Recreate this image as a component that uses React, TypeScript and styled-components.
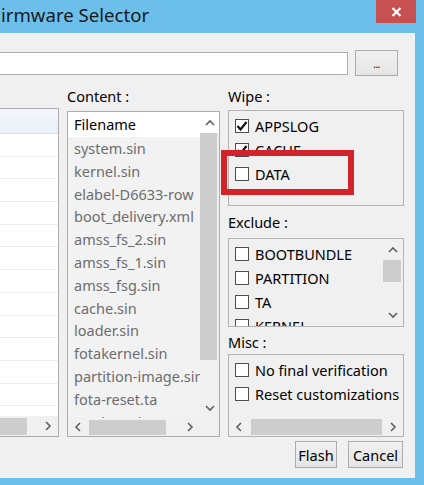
import React from 'react'
import styled, { createGlobalStyle } from 'styled-components'

const Global = createGlobalStyle`
  html, body {
    margin: 0;
    padding: 0;
    overflow: hidden;
    background: #6cbfeb;
  }
  body {
    font-family: "Noto Sans", "Open Sans", "DejaVu Sans", sans-serif;
    color: #000;
  }
  * { box-sizing: border-box; }
`

const Window = styled.div`
  width: 424px;
  height: 485px;
  background: #6cbfeb;
  display: flex;
  flex-direction: column;
`

const TitleBar = styled.div`
  height: 33px;
  flex: none;
  display: flex;
  justify-content: space-between;
  align-items: flex-start;
  padding-right: 8px;
`

const Title = styled.div`
  font-size: 18.6px;
  line-height: 30px;
  color: #1a1a1a;
  padding-left: 1px;
`

const CloseButton = styled.div`
  width: 40px;
  height: 23px;
  background: #c75050;
  display: flex;
  align-items: center;
  justify-content: center;
`

const Body = styled.div`
  width: 415px;
  height: 445px;
  flex: none;
  background: #f0f0f0;
  border-top: 1px solid #f8f8f8;
  padding: 16px 11px 0 0;
  display: flex;
  flex-direction: column;
  overflow: hidden;
`

const PathRow = styled.div`
  height: 26px;
  flex: none;
  display: flex;
  align-items: center;
  gap: 7px;
  margin-right: 6px;
`

const PathInput = styled.div`
  flex: 1;
  height: 23px;
  background: #fff;
  border: 1px solid #abadb3;
  border-left: none;
`

const Button = styled.div<{ $w: number; $h: number }>`
  width: ${p => p.$w}px;
  height: ${p => p.$h}px;
  border: 1px solid #acacac;
  background: linear-gradient(#f0f0f0, #e5e5e5);
  display: flex;
  align-items: center;
  justify-content: center;
  font-size: 14.5px;
  color: #000;
`

const Dots = styled.span`
  font-size: 10px;
  letter-spacing: -0.5px;
  padding-top: 2px;
`

const Main = styled.div`
  height: 361px;
  flex: none;
  display: grid;
  grid-template-columns: 59px 153px 1fr;
  grid-template-rows: minmax(0, 1fr);
  column-gap: 8px;
`

const Column = styled.div`
  position: relative;
  display: flex;
  flex-direction: column;
  min-width: 0;
  min-height: 0;
`

const LeftList = styled.div`
  margin-top: 32px;
  flex: 1;
  min-height: 0;
  display: flex;
  flex-direction: column;
  background: #fff;
  border: 1px solid #acacac;
  border-left: none;
  overflow: hidden;
`

const LeftHeader = styled.div`
  height: 25px;
  flex: none;
  background: linear-gradient(#f4f7fc, #e9f0f9);
  border-bottom: 1px solid #dfe3e8;
`

const LeftRows = styled.div`
  flex: 1;
  min-height: 0;
  overflow: hidden;
`

const LeftRow = styled.div`
  height: 22.7px;
  border-bottom: 1px solid #eeeeee;
`

const Label = styled.div<{ $top: number; $bottom: number }>`
  font-size: 14.5px;
  line-height: 20px;
  height: 20px;
  flex: none;
  margin: ${p => p.$top}px 0 ${p => p.$bottom}px;
  white-space: nowrap;
`

const ContentList = styled.div`
  flex: 1;
  min-height: 0;
  display: grid;
  grid-template-columns: minmax(0, 1fr) 19px;
  grid-template-rows: minmax(0, 1fr) 18px;
  border: 1px solid #acacac;
  background: #f0f0f0;
  overflow: hidden;
`

const Items = styled.div`
  background: #f2f2f2;
  overflow: hidden;
  min-width: 0;
  min-height: 0;
`

const HeaderCell = styled.div`
  height: 25px;
  background: #fff;
  padding-left: 6px;
  font-size: 14.5px;
  line-height: 25px;
  white-space: nowrap;
`

const Item = styled.div`
  height: 22.8px;
  padding-left: 6px;
  font-size: 14.5px;
  line-height: 22.8px;
  color: #6d6d6d;
  white-space: nowrap;
`

const VScroll = styled.div`
  display: flex;
  flex-direction: column;
  background: #f0f0f0;
  min-height: 0;
`

const VArrow = styled.div<{ $h: number; $white?: boolean }>`
  height: ${p => p.$h}px;
  flex: none;
  display: flex;
  align-items: center;
  justify-content: center;
  background: ${p => (p.$white ? '#fff' : 'transparent')};
`

const VThumb = styled.div<{ $h: number }>`
  height: ${p => p.$h}px;
  flex: none;
  margin: 0 2px 0 0;
  background: #cdcdcd;
`

const Spacer = styled.div`
  flex: 1;
`

const HScroll = styled.div<{ $h?: number }>`
  ${p => (p.$h ? `height: ${p.$h}px;` : '')}
  flex: none;
  display: flex;
  align-items: stretch;
  background: #f0f0f0;
  min-width: 0;
`

const HArrow = styled.div`
  width: 20px;
  flex: none;
  display: flex;
  align-items: center;
  justify-content: center;
`

const HThumb = styled.div<{ $left: number; $w: number }>`
  width: ${p => p.$w}px;
  margin: 2px 0 1px ${p => p.$left}px;
  flex: none;
  background: #cdcdcd;
`

const Group = styled.div<{ $h?: number }>`
  ${p => (p.$h ? `height: ${p.$h}px; flex: none;` : 'flex: 1; min-height: 0;')}
  border: 1px solid #b4b4b4;
  display: flex;
  flex-direction: column;
  overflow: hidden;
`

const GroupScroller = styled.div`
  flex: 1;
  display: grid;
  grid-template-columns: minmax(0, 1fr) 20px;
  grid-template-rows: minmax(0, 1fr);
  min-height: 0;
`

const Checks = styled.div<{ $top: number }>`
  padding: ${p => p.$top}px 0 0 6px;
  overflow: hidden;
  flex: 1;
  min-height: 0;
`

const CheckRow = styled.div`
  height: 24px;
  display: flex;
  align-items: center;
  gap: 6px;
  font-size: 14.5px;
  white-space: nowrap;
`

const Box = styled.div`
  width: 14px;
  height: 14px;
  flex: none;
  background: #fff;
  border: 1px solid #4d4d4d;
  display: flex;
  align-items: center;
  justify-content: center;
`

const Highlight = styled.div`
  position: absolute;
  left: -7px;
  top: 74px;
  width: 133px;
  height: 45px;
  border: 6px solid #d2232a;
`

const Footer = styled.div`
  margin-top: 4px;
  flex: none;
  display: flex;
  justify-content: flex-end;
  gap: 11px;
  padding-right: 1px;
`

const Chevron: React.FC<{ dir: 'up' | 'down' | 'left' | 'right' }> = ({ dir }) => {
  const d = {
    up: 'M1 6 L5 2 L9 6',
    down: 'M1 2 L5 6 L9 2',
    left: 'M6 1 L2 5 L6 9',
    right: 'M2 1 L6 5 L2 9',
  }[dir]
  const vert = dir === 'up' || dir === 'down'
  return (
    <svg width={vert ? 10 : 8} height={vert ? 8 : 10} viewBox={vert ? '0 0 10 8' : '0 0 8 10'}>
      <path d={d} fill="none" stroke="#606060" strokeWidth="1.6" />
    </svg>
  )
}

const Check: React.FC<{ checked?: boolean; label: string }> = ({ checked, label }) => (
  <CheckRow>
    <Box>
      {checked && (
        <svg width="12" height="12" viewBox="0 0 12 12">
          <path d="M1.5 6 L4.5 9.5 L10.5 2" fill="none" stroke="#111" strokeWidth="2.2" />
        </svg>
      )}
    </Box>
    {label}
  </CheckRow>
)

const files = [
  'system.sin',
  'kernel.sin',
  'elabel-D6633-row',
  'boot_delivery.xml',
  'amss_fs_2.sin',
  'amss_fs_1.sin',
  'amss_fsg.sin',
  'cache.sin',
  'loader.sin',
  'fotakernel.sin',
  'partition-image.sin',
  'fota-reset.ta',
  'modem.sin',
]

export default function App() {
  return (
    <Window>
      <Global />
      <TitleBar>
        <Title>irmware Selector</Title>
        <CloseButton>
          <svg width="11" height="10" viewBox="0 0 11 10">
            <path d="M1.5 1 L9.5 9 M9.5 1 L1.5 9" stroke="#fff" strokeWidth="2.2" />
          </svg>
        </CloseButton>
      </TitleBar>
      <Body>
        <PathRow>
          <PathInput />
          <Button $w={43} $h={26}><Dots>...</Dots></Button>
        </PathRow>
        <Main>
          <Column>
            <LeftList>
              <LeftHeader />
              <LeftRows>
                {Array.from({ length: 13 }).map((_, i) => <LeftRow key={i} />)}
              </LeftRows>
              <HScroll $h={20}>
                <HThumb $left={0} $w={27} />
                <Spacer />
                <HArrow><Chevron dir="right" /></HArrow>
              </HScroll>
            </LeftList>
          </Column>

          <Column>
            <Label $top={10} $bottom={5}>Content :</Label>
            <ContentList>
              <Items>
                <HeaderCell>Filename</HeaderCell>
                {files.map(f => <Item key={f}>{f}</Item>)}
              </Items>
              <VScroll>
                <VArrow $h={21} $white><Chevron dir="up" /></VArrow>
                <VThumb $h={227} />
                <Spacer />
                <VArrow $h={21}><Chevron dir="down" /></VArrow>
              </VScroll>
              <HScroll>
                <HArrow><Chevron dir="left" /></HArrow>
                <HThumb $left={1} $w={77} />
                <Spacer />
                <HArrow><Chevron dir="right" /></HArrow>
              </HScroll>
              <div />
            </ContentList>
          </Column>

          <Column>
            <Label $top={10} $bottom={4}>Wipe :</Label>
            <Group $h={96}>
              <Checks $top={3}>
                <Check checked label="APPSLOG" />
                <Check checked label="CACHE" />
                <Check label="DATA" />
              </Checks>
            </Group>
            <Label $top={6} $bottom={6}>Exclude :</Label>
            <Group $h={89}>
              <GroupScroller>
                <Checks $top={3}>
                  <Check label="BOOTBUNDLE" />
                  <Check label="PARTITION" />
                  <Check label="TA" />
                  <Check label="KERNEL" />
                </Checks>
                <VScroll>
                  <VArrow $h={21}><Chevron dir="up" /></VArrow>
                  <VThumb $h={22} />
                  <Spacer />
                  <VArrow $h={23}><Chevron dir="down" /></VArrow>
                </VScroll>
              </GroupScroller>
            </Group>
            <Label $top={5} $bottom={2}>Misc :</Label>
            <Group>
              <Checks $top={3}>
                <Check label="No final verification" />
                <Check label="Reset customizations" />
              </Checks>
              <HScroll $h={19}>
                <HArrow><Chevron dir="left" /></HArrow>
                <HThumb $left={2} $w={131} />
                <Spacer />
                <HArrow><Chevron dir="right" /></HArrow>
              </HScroll>
            </Group>
            <Highlight />
          </Column>
        </Main>
        <Footer>
          <Button $w={42} $h={27}>Flash</Button>
          <Button $w={55} $h={27}>Cancel</Button>
        </Footer>
      </Body>
    </Window>
  )
}
